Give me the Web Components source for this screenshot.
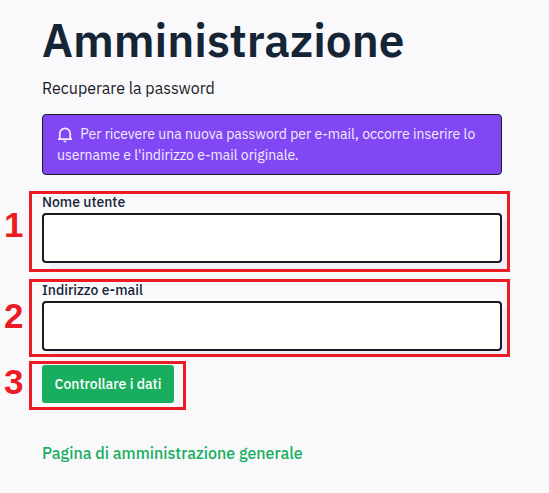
<!DOCTYPE html>
<html lang="it">
<head>
<meta charset="utf-8">
<title>Amministrazione</title>
<style>
  body {
    margin: 0;
    background: #f9f9fc;
    color: #1b1b1f;
    font-family: "IBM Plex Sans", Roboto, "Liberation Sans", sans-serif;
  }
</style>
</head>
<body>
<admin-page>
  <page-title slot="head">Amministrazione</page-title>
  <page-intro slot="head">Recuperare la password</page-intro>
  <info-message slot="head">Per ricevere una nuova password per e-mail, occorre inserire lo username e l'indirizzo e-mail originale.</info-message>
  <step-mark number="1" style="--top: 0px; --height: 81px; --num-top: 12px">
    <text-field label="Nome utente"></text-field>
  </step-mark>
  <step-mark number="2" style="--top: 0px; --height: 78px; --num-top: 15px">
    <text-field label="Indirizzo e-mail"></text-field>
  </step-mark>
  <step-mark number="3" style="--top: -6px; --height: 49px; --width: 157px; --num-top: -7px">
    <green-button>Controllare i dati</green-button>
  </step-mark>
  <page-link slot="foot">Pagina di amministrazione generale</page-link>
</admin-page>

<script>
class BaseElement extends HTMLElement {
    constructor() {
        super();
        this.attachShadow({ mode: "open" });
    }

    connectedCallback() {
        this.shadowRoot.innerHTML = this.render();
    }
}

class AdminPage extends BaseElement {
    render() {
        return `
      <style>
        :host {
          display: block;
          box-sizing: border-box;
          width: 549px;
          height: 493px;
          padding: 10px 47px 0 42px;
          overflow: hidden;
        }

        .form {
          display: flex;
          flex-direction: column;
          margin-top: 16px;
        }
      </style>
      <slot name="head"></slot>
      <div class="form"><slot></slot></div>
      <slot name="foot"></slot>
    `;
    }
}

class PageTitle extends BaseElement {
    render() {
        return `
      <style>
        :host { display: block; height: 66px; }

        h1 {
          margin: 0;
          color: #152536;
          font-size: 46px;
          font-weight: 600;
          line-height: 60px;
          white-space: nowrap;
        }
      </style>
      <h1><slot></slot></h1>
    `;
    }
}

class PageIntro extends BaseElement {
    render() {
        return `
      <style>
        :host {
          display: block;
          height: 38px;
          font-size: 16px;
          line-height: 25px;
        }
      </style>
      <slot></slot>
    `;
    }
}

class InfoMessage extends BaseElement {
    render() {
        return `
      <style>
        :host {
          display: block;
          box-sizing: border-box;
          height: 61px;
          padding: 9px 14px;
          border: 1px solid #1b1b1f;
          border-radius: 4px;
          background: #8247f5;
          color: #f3edff;
          font-size: 14px;
          line-height: 21px;
        }

        svg {
          width: 16px;
          height: 16px;
          margin-right: 4px;
          vertical-align: -4px;
        }
      </style>
      <svg viewBox="0 0 16 16" fill="none" stroke="currentColor" stroke-width="1.7">
        <path d="M1 12.2h14M2.8 12V6.5a5.2 5.2 0 0 1 10.4 0V12"/>
        <path d="M6 13.7h4L8 15.7z" fill="currentColor" stroke="none"/>
      </svg>
      <slot></slot>
    `;
    }
}

class TextField extends BaseElement {
    render() {
        return `
      <style>
        :host { display: block; height: 88px; }

        label {
          display: block;
          height: 22px;
          color: #152536;
          font-size: 14px;
          font-weight: 500;
          line-height: 23px;
        }

        input {
          display: block;
          box-sizing: border-box;
          width: 100%;
          height: 50px;
          border: 2px solid #1b1b1f;
          border-radius: 4px;
          background: #fff;
          box-shadow: 8px 8px 0 #eeeff8;
          clip-path: inset(0 -8px -6px 0);
          outline: none;
        }
      </style>
      <label for="field">${this.getAttribute("label")}</label>
      <input id="field" type="text">
    `;
    }
}

class GreenButton extends BaseElement {
    render() {
        return `
      <style>
        :host { display: block; height: 76px; margin-top: -2px; }

        button {
          display: block;
          box-sizing: border-box;
          width: 132px;
          height: 38px;
          padding: 0;
          border: 0;
          border-radius: 3px;
          background: #18ae5e;
          color: #fff;
          font: inherit;
          font-size: 14px;
          font-weight: 500;
        }
      </style>
      <button type="button"><slot></slot></button>
    `;
    }
}

/* numbered red frame laid over a form row */
class StepMark extends BaseElement {
    render() {
        return `
      <style>
        :host { display: block; position: relative; }

        .frame {
          position: absolute;
          box-sizing: border-box;
          left: -13px;
          top: var(--top);
          width: var(--width, 481px);
          height: var(--height);
          border: 3px solid #ed1c24;
          pointer-events: none;
        }

        .number {
          position: absolute;
          left: -38px;
          top: var(--num-top);
          color: #ed1c24;
          font: bold 35px/44px "Liberation Sans", Arial, sans-serif;
        }
      </style>
      <slot></slot>
      <div class="frame"></div>
      <div class="number">${this.getAttribute("number")}</div>
    `;
    }
}

class PageLink extends BaseElement {
    render() {
        return `
      <style>
        a {
          color: #18ae5e;
          font-size: 16px;
          font-weight: 500;
          line-height: 24px;
          text-decoration: none;
        }
      </style>
      <a href="#"><slot></slot></a>
    `;
    }
}

customElements.define("admin-page", AdminPage);
customElements.define("page-title", PageTitle);
customElements.define("page-intro", PageIntro);
customElements.define("info-message", InfoMessage);
customElements.define("text-field", TextField);
customElements.define("green-button", GreenButton);
customElements.define("step-mark", StepMark);
customElements.define("page-link", PageLink);
</script>
</body>
</html>
